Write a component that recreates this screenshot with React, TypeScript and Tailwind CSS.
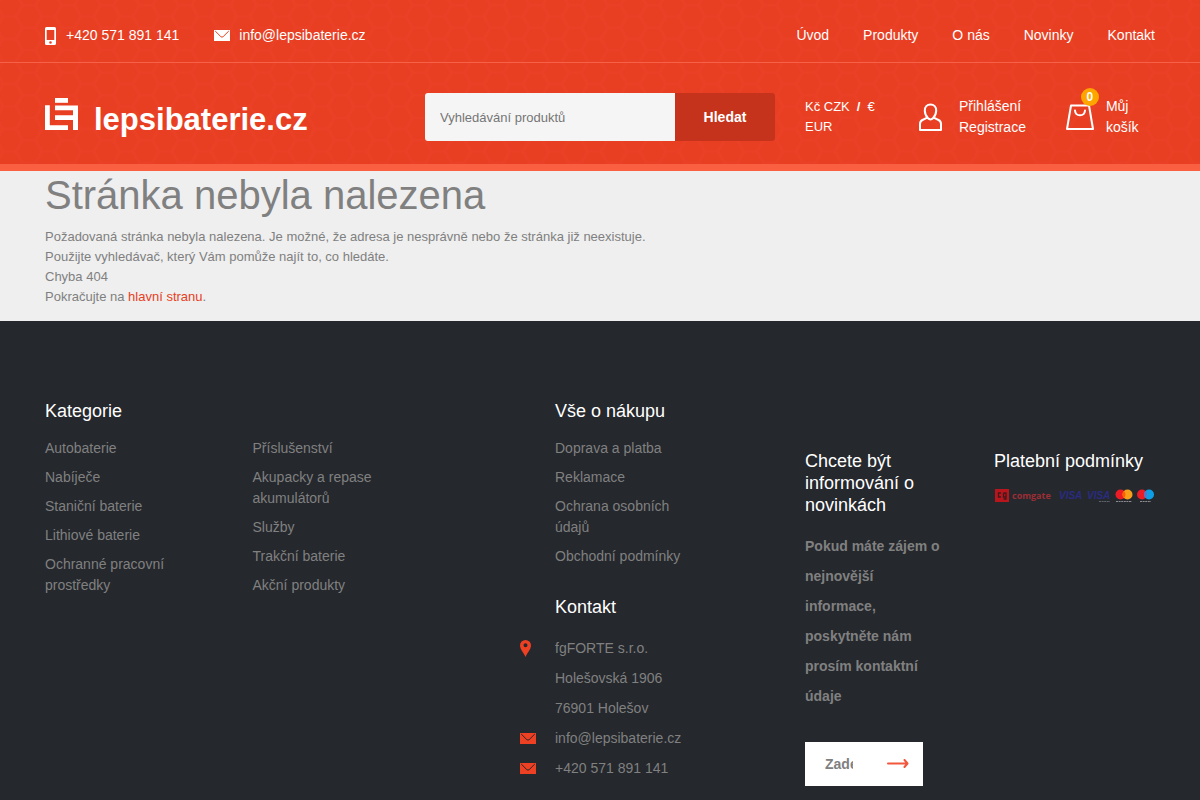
import { useState } from "react";

const navItems = ["Úvod", "Produkty", "O nás", "Novinky", "Kontakt"];

const categories = [
  ["Autobaterie", "Nabíječe", "Staniční baterie", "Lithiové baterie", "Ochranné pracovní prostředky"],
  ["Příslušenství", "Akupacky a repase akumulátorů", "Služby", "Trakční baterie", "Akční produkty"],
];

const shopping = ["Doprava a platba", "Reklamace", "Ochrana osobních údajů", "Obchodní podmínky"];

function Honeycomb() {
  return (
    <svg className="absolute inset-0 h-full w-full" aria-hidden="true">
      <defs>
        <pattern id="honeycomb" x="-10" y="-6" width="39" height="22.5" patternUnits="userSpaceOnUse">
          <path
            d="M0 11.25h6.5l6.5-11.25h13l6.5 11.25h6.5M6.5 11.25l6.5 11.25h13l6.5-11.25"
            fill="none"
            stroke="#f04a2e"
            strokeWidth="3"
            strokeLinejoin="round"
            strokeOpacity="0.3"
          />
        </pattern>
      </defs>
      <rect width="100%" height="100%" fill="url(#honeycomb)" />
    </svg>
  );
}

function PhoneIcon() {
  return (
    <svg width="11" height="18" viewBox="0 0 11 18" aria-hidden="true">
      <path
        fillRule="evenodd"
        fill="#fff"
        d="M1.500 0h8A1.500 1.500 0 0 1 11 1.500v15A1.500 1.500 0 0 1 9.500 18h-8A1.500 1.500 0 0 1 0 16.500v-15A1.500 1.500 0 0 1 1.500 0zM1.700 3v10h7.600V3zM5.500 14.200a1.300 1.300 0 1 0 0 2.600 1.300 1.300 0 0 0 0-2.600z"
      />
    </svg>
  );
}

function MailIcon({ fill, line }: { fill: string; line: string }) {
  return (
    <svg width="16" height="11" viewBox="0 0 16 11" aria-hidden="true">
      <path d="M0 0h16v11H0z" fill={fill} />
      <path d="M1.200 1l5.600 5.600q1.200 1.100 2.400 0L14.800 1" fill="none" stroke={line} strokeWidth="1" />
    </svg>
  );
}

function PinIcon() {
  return (
    <svg width="11" height="17" viewBox="0 0 11 17" aria-hidden="true">
      <path
        fillRule="evenodd"
        fill="#ee4023"
        d="M5.500 0A5.500 5.500 0 0 1 11 5.500C11 9 7.500 12.500 5.500 17 3.500 12.500 0 9 0 5.500A5.500 5.500 0 0 1 5.500 0zM5.500 3.300a2 2 0 1 0 0 4 2 2 0 0 0 0-4z"
      />
    </svg>
  );
}

function LogoMark() {
  return (
    <svg width="33" height="32" viewBox="0 0 33 32" fill="#fff" aria-hidden="true">
      <path d="M10 0h13v4.800H10z" />
      <path d="M0 7.300h4.800v19.900H23V32H0z" />
      <path d="M10 7.500h23V32h-5V22H10v-4.700h18v-5H10z" />
    </svg>
  );
}

function UserIcon() {
  return (
    <svg width="23" height="28" viewBox="0 0 23 28" fill="none" stroke="#fff" strokeWidth="2" strokeLinejoin="round" aria-hidden="true">
      <path d="M11.500 1.500C8 1.500 5.800 4 5.800 7.500c0 3.200 1.700 6.200 3.200 7.800 1.400 1.500 3.600 1.500 5 0 1.500-1.600 3.200-4.600 3.200-7.800 0-3.500-2.200-6-5.700-6z" />
      <path d="M8.300 14.700l-4.800 2.300C1.800 17.800 1 19.200 1 21v6h21v-6c0-1.800-.8-3.200-2.500-4l-4.800-2.300" />
    </svg>
  );
}

function BagIcon() {
  return (
    <svg width="28" height="26" viewBox="0 0 28 26" fill="none" stroke="#fff" strokeWidth="2" strokeLinejoin="round" aria-hidden="true">
      <path d="M5 1.500h18L27 25H1z" />
      <path d="M9 6.500c.3 3.200 2.200 4.800 5 4.800s4.700-1.600 5-4.800" strokeLinecap="round" />
    </svg>
  );
}

function PaymentLogos() {
  return (
    <svg width="160" height="14" viewBox="0 0 160 14" role="img" aria-label="Comgate, Visa, Mastercard, Maestro" fontFamily="'Liberation Sans', sans-serif">
      <rect x="1" width="14" height="13" fill="#b8161c" />
      <path d="M7 4H4.500v4H7M9.500 4H12v6H9.500M9.500 4v4H12" fill="none" stroke="#40191d" strokeWidth="1.300" />
      <text x="18" y="10" fontSize="9" fontFamily="'Open Sans', sans-serif" fontWeight="700" fill="#9c2e35">comgate</text>
      <text x="65" y="10" fontSize="10" fontWeight="700" fontStyle="italic" fill="#2a2c80">VISA</text>
      <text x="93" y="10" fontSize="10" fontWeight="700" fontStyle="italic" fill="#2a2c80">VISA</text>
      <path d="M105 12.500h11" stroke="#62646e" strokeDasharray="2 .6" />
      <circle cx="126.500" cy="5.500" r="5" fill="#eb1c26" />
      <circle cx="133.500" cy="5.500" r="5" fill="#f79e1b" />
      <path d="M130 2a5 5 0 0 1 0 7 5 5 0 0 1 0-7z" fill="#ff5f00" />
      <path d="M122 12.500h16" stroke="#8b8c8f" strokeDasharray="2 .6" />
      <circle cx="148" cy="5.500" r="5" fill="#eb1c26" />
      <circle cx="155" cy="5.500" r="5" fill="#0e9ee5" />
      <path d="M151.500 2a5 5 0 0 1 0 7 5 5 0 0 1 0-7z" fill="#6c6bbd" />
      <path d="M146 12.500h11" stroke="#8b8c8f" strokeDasharray="2 .6" />
    </svg>
  );
}

function LinkList({ items }: { items: string[] }) {
  return (
    <ul className="space-y-2">
      {items.map((item) => (
        <li key={item}>
          <a href="#" className="block hover:text-white">{item}</a>
        </li>
      ))}
    </ul>
  );
}

function Header() {
  const [query, setQuery] = useState("");

  return (
    <header className="relative border-b-[7px] border-[#fb5f42] bg-[#e83e22] text-sm leading-[21px] text-white">
      <Honeycomb />
      <div className="relative">
        <div className="flex justify-between border-b border-[#f66248] px-[45px] pt-[25px] pb-4">
          <div className="flex gap-[35px]">
            <a href="tel:+420571891141" className="flex items-center gap-[10px]">
              <PhoneIcon />
              +420 571 891 141
            </a>
            <a href="mailto:info@lepsibaterie.cz" className="flex items-center gap-[9px]">
              <MailIcon fill="#fff" line="#e83e22" />
              info@lepsibaterie.cz
            </a>
          </div>
          <nav className="flex gap-[34px]">
            {navItems.map((item) => (
              <a key={item} href="#" className="hover:underline">{item}</a>
            ))}
          </nav>
        </div>

        <div className="grid grid-cols-3 gap-[30px] px-[45px] pt-[30px] pb-[23px]">
          <a href="#" className="flex items-baseline gap-4 pt-[5px]">
            <LogoMark />
            <span className="text-[31px] leading-8 font-bold">lepsibaterie.cz</span>
          </a>

          <form className="flex h-12" onSubmit={(e) => e.preventDefault()}>
            <input
              type="search"
              aria-label="Vyhledávání produktů"
              placeholder="Vyhledávání produktů"
              value={query}
              onChange={(e) => setQuery(e.target.value)}
              className="min-w-0 flex-1 rounded-l-[3px] bg-[#f5f5f5] px-[15px] text-[13px] text-[#757575] outline-none placeholder:text-[#757575]"
            />
            <button type="submit" className="w-[100px] rounded-r-[3px] bg-[#c5331d] font-bold">
              Hledat
            </button>
          </form>

          <div className="flex h-12 items-center">
            <div className="w-[84px] text-[13px] leading-5">
              <a href="#">Kč CZK</a>
              <b className="px-[7px]">/</b>
              <a href="#">€ EUR</a>
            </div>
            <div className="ml-[30px] flex items-center gap-[17px]">
              <UserIcon />
              <div>
                <a href="#" className="block">Přihlášení</a>
                <a href="#" className="block">Registrace</a>
              </div>
            </div>
            <a href="#" className="ml-10 flex items-center gap-3">
              <span className="relative">
                <BagIcon />
                <span className="absolute -top-4 left-[15px] h-[18px] w-[18px] rounded-full bg-[#ffa500] text-center text-xs leading-[18px] font-bold">
                  0
                </span>
              </span>
              <span className="w-10">Můj košík</span>
            </a>
          </div>
        </div>
      </div>
    </header>
  );
}

function Footer() {
  const [email, setEmail] = useState("");

  return (
    <footer className="grid flex-1 grid-cols-[48fr_22fr_35fr] gap-x-[30px] bg-[#25282d] px-[45px] pt-[79px] pb-[14px] text-sm leading-[21px] text-[#808080]">
      <section>
        <h2 className="mb-4 text-lg leading-[22px] text-white">Kategorie</h2>
        <div className="grid grid-cols-2 gap-[30px] pr-[95px]">
          {categories.map((items) => (
            <LinkList key={items[0]} items={items} />
          ))}
        </div>
      </section>

      <div>
        <section className="pr-20">
          <h2 className="mb-4 text-lg leading-[22px] text-white">Vše o nákupu</h2>
          <LinkList items={shopping} />
        </section>
        <section className="mt-[29px]">
          <h2 className="mb-[15px] text-lg leading-[22px] text-white">Kontakt</h2>
          <address className="-ml-[35px] leading-[30px] not-italic">
            <div className="flex">
              <span className="flex h-[30px] w-[35px] items-center"><PinIcon /></span>
              <p>
                fgFORTE s.r.o.
                <br />
                Holešovská 1906
                <br />
                76901 Holešov
              </p>
            </div>
            <div className="flex">
              <span className="flex h-[30px] w-[35px] items-center"><MailIcon fill="#ee4023" line="#25282d" /></span>
              <a href="mailto:info@lepsibaterie.cz">info@lepsibaterie.cz</a>
            </div>
            <div className="flex">
              <span className="flex h-[30px] w-[35px] items-center"><MailIcon fill="#ee4023" line="#25282d" /></span>
              <a href="tel:+420571891141">+420 571 891 141</a>
            </div>
          </address>
        </section>
      </div>

      <div className="grid grid-cols-[138fr_161fr] gap-[51px] pt-[50px]">
        <section>
          <h2 className="mb-[15px] text-lg leading-[22px] text-white">Chcete být informování o novinkách</h2>
          <p className="leading-[30px] font-bold">
            Pokud máte zájem o nejnovější informace, poskytněte nám prosím kontaktní údaje
          </p>
          <form className="mt-[31px] flex h-11 w-[118px] bg-white font-bold" onSubmit={(e) => e.preventDefault()}>
            <input
              type="email"
              aria-label="Zadejte e-mail"
              placeholder="Zadejte e-mail"
              value={email}
              onChange={(e) => setEmail(e.target.value)}
              className="w-[68px] px-5 outline-none placeholder:text-[#808080]"
            />
            <button type="submit" aria-label="Odeslat" className="flex flex-1 items-center justify-center">
              <svg width="22" height="10" viewBox="0 0 22 10" fill="none" stroke="#f2573d" strokeWidth="2" strokeLinecap="round" strokeLinejoin="round">
                <path d="M1 4.500h19M17.500 1l3 3.500-3 3.500" />
              </svg>
            </button>
          </form>
        </section>
        <section>
          <h2 className="mb-[17px] text-lg leading-[22px] text-white">Platební podmínky</h2>
          <PaymentLogos />
        </section>
      </div>
    </footer>
  );
}

export default function App() {
  return (
    <div className="flex min-h-screen flex-col bg-[#efefef] font-['Liberation_Sans',Arial,sans-serif]">
      <Header />
      <main className="px-[45px] pb-[14px] text-[13px] leading-5 text-[#808080]">
        <h1 className="mb-2 text-[40px] leading-[48px]">Stránka nebyla nalezena</h1>
        <p>Požadovaná stránka nebyla nalezena. Je možné, že adresa je nesprávně nebo že stránka již neexistuje.</p>
        <p>Použijte vyhledávač, který Vám pomůže najít to, co hledáte.</p>
        <p>Chyba 404</p>
        <p>
          Pokračujte na <a href="#" className="text-[#e83e22]">hlavní stranu</a>.
        </p>
      </main>
      <Footer />
    </div>
  );
}
